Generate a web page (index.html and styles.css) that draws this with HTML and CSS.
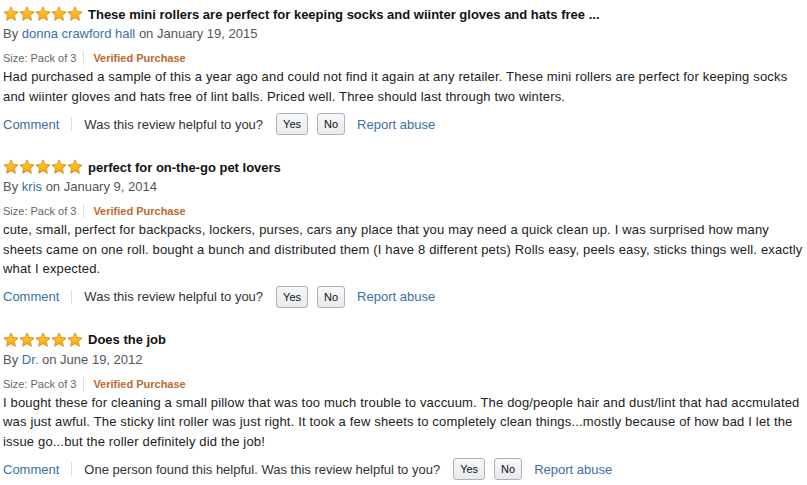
FILE: index.html
```html
<!DOCTYPE html>
<html>
<head>
<meta charset="utf-8">
<link rel="stylesheet" href="styles.css">
</head>
<body>
<svg width="0" height="0" class="defs">
  <defs>
    <linearGradient id="g" x1="0" y1="0" x2="0" y2="1">
      <stop offset="0" stop-color="#ffce3d"/>
      <stop offset="1" stop-color="#f7a513"/>
    </linearGradient>
    <symbol id="star" viewBox="0 0 16 16">
      <path d="M8 0.9 L10.1 5.5 L15.1 6 L11.3 9.3 L12.4 14.3 L8 11.7 L3.6 14.3 L4.7 9.3 L0.9 6 L5.9 5.5 Z" fill="url(#g)" stroke="#d88b12" stroke-width="0.9" stroke-linejoin="round"/>
    </symbol>
  </defs>
</svg>
<div class="reviews">
  <div class="review">
    <div class="title-row">
      <span class="stars"><svg><use href="#star"/></svg><svg><use href="#star"/></svg><svg><use href="#star"/></svg><svg><use href="#star"/></svg><svg><use href="#star"/></svg></span>
      <span class="title">These mini rollers are perfect for keeping socks and wiinter gloves and hats free ...</span>
    </div>
    <div class="byline">By <a class="link">donna crawford hall</a> on January 19, 2015</div>
    <div class="meta"><span>Size: Pack of 3</span><span class="sep"></span><span class="verified">Verified Purchase</span></div>
    <div class="body">Had purchased a sample of this a year ago and could not find it again at any retailer. These mini rollers are perfect for keeping socks and wiinter gloves and hats free of lint balls. Priced well. Three should last through two winters.</div>
    <div class="actions">
      <a class="link">Comment</a><span class="asep"></span>
      <span class="helpful">Was this review helpful to you?</span>
      <button class="btn">Yes</button><button class="btn">No</button>
      <a class="link report">Report abuse</a>
    </div>
  </div>
  <div class="review">
    <div class="title-row">
      <span class="stars"><svg><use href="#star"/></svg><svg><use href="#star"/></svg><svg><use href="#star"/></svg><svg><use href="#star"/></svg><svg><use href="#star"/></svg></span>
      <span class="title">perfect for on-the-go pet lovers</span>
    </div>
    <div class="byline">By <a class="link">kris</a> on January 9, 2014</div>
    <div class="meta"><span>Size: Pack of 3</span><span class="sep"></span><span class="verified">Verified Purchase</span></div>
    <div class="body">cute, small, perfect for backpacks, lockers, purses, cars any place that you may need a quick clean up. I was surprised how many sheets came on one roll. bought a bunch and distributed them (I have 8 different pets) Rolls easy, peels easy, sticks things well. exactly what I expected.</div>
    <div class="actions">
      <a class="link">Comment</a><span class="asep"></span>
      <span class="helpful">Was this review helpful to you?</span>
      <button class="btn">Yes</button><button class="btn">No</button>
      <a class="link report">Report abuse</a>
    </div>
  </div>
  <div class="review">
    <div class="title-row">
      <span class="stars"><svg><use href="#star"/></svg><svg><use href="#star"/></svg><svg><use href="#star"/></svg><svg><use href="#star"/></svg><svg><use href="#star"/></svg></span>
      <span class="title">Does the job</span>
    </div>
    <div class="byline">By <a class="link">Dr.</a> on June 19, 2012</div>
    <div class="meta"><span>Size: Pack of 3</span><span class="sep"></span><span class="verified">Verified Purchase</span></div>
    <div class="body">I bought these for cleaning a small pillow that was too much trouble to vaccuum. The dog/people hair and dust/lint that had accmulated was just awful. The sticky lint roller was just right. It took a few sheets to completely clean things...mostly because of how bad I let the issue go...but the roller definitely did the job!</div>
    <div class="actions">
      <a class="link">Comment</a><span class="asep"></span>
      <span class="helpful">One person found this helpful. Was this review helpful to you?</span>
      <button class="btn">Yes</button><button class="btn">No</button>
      <a class="link report">Report abuse</a>
    </div>
  </div>
</div>
</body>
</html>
```
FILE: styles.css
```css
html, body {
  margin: 0;
  padding: 0;
  background: #fff;
}
body {
  font-family: "Liberation Sans", Arial, sans-serif;
  font-size: 13px;
  color: #222;
}
.defs {
  position: absolute;
  width: 0;
  height: 0;
}
.reviews {
  padding: 4px 0 0 3px;
}
.review {
  margin-bottom: 22px;
}
.title-row {
  display: flex;
  align-items: center;
  height: 20px;
}
.stars {
  display: flex;
  margin-right: 5px;
}
.stars svg {
  width: 16px;
  height: 16px;
  display: block;
}
.title {
  font-weight: bold;
  color: #111;
}
.byline {
  line-height: 19px;
  color: #555;
}
.link {
  color: #3a6fa5;
  text-decoration: none;
}
.meta {
  display: flex;
  align-items: center;
  margin-top: 6px;
  height: 18px;
  font-size: 11px;
  color: #666;
}
.sep {
  display: inline-block;
  width: 1px;
  height: 14px;
  background: #ddd;
  margin: 0 9px 0 7px;
}
.verified {
  font-weight: bold;
  color: #bd6a2e;
}
.body {
  line-height: 19.5px;
  color: #222;
  letter-spacing: 0.17px;
}
.actions {
  display: flex;
  align-items: center;
  margin-top: 7px;
  height: 22px;
}
.asep {
  display: inline-block;
  width: 1px;
  height: 14px;
  background: #ddd;
  margin: 0 12px 0 12px;
}
.helpful {
  color: #333;
  margin-right: 13px;
}
.btn {
  font-family: "Liberation Sans", Arial, sans-serif;
  font-size: 11px;
  color: #111;
  height: 22px;
  padding: 0 6px;
  margin: 0 9px 0 0;
  border: 1px solid #adb1b8;
  border-radius: 3px;
  background: linear-gradient(#f7f8fa, #e7e9ec);
}
.report {
  margin-left: 3px;
}
```
